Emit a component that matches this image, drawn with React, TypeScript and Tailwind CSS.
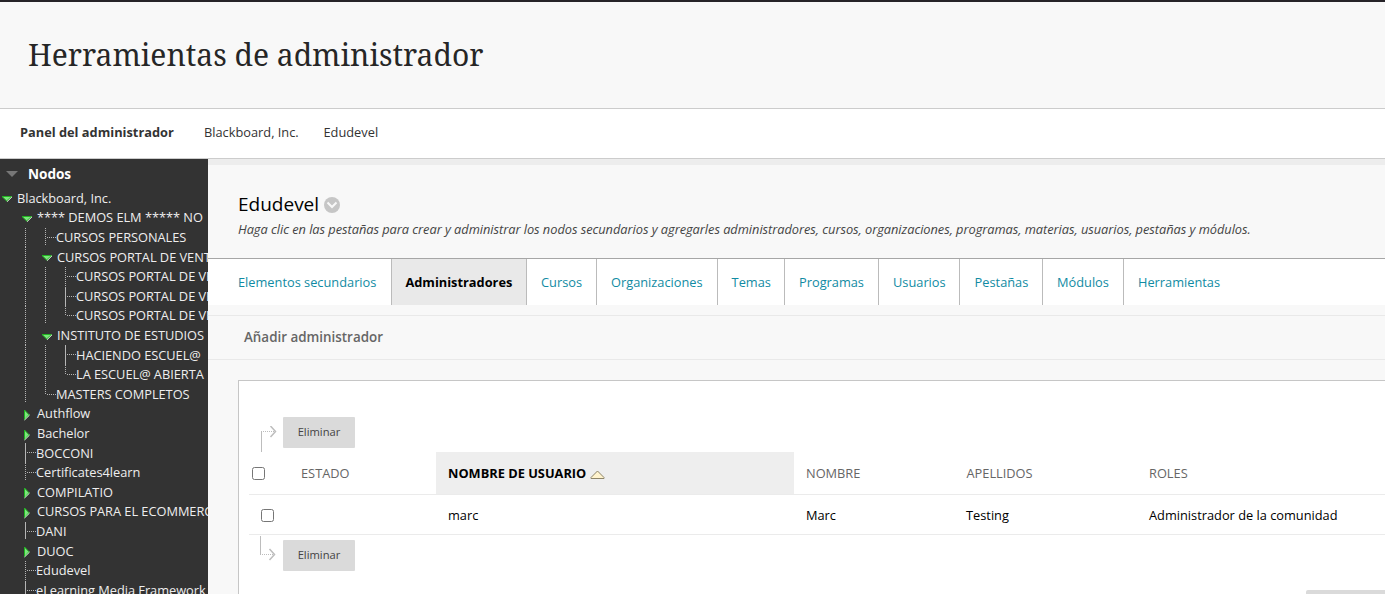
import React from 'react';
import clsx from 'clsx';

// Guides, one character per level to the left of the node:
// ' ' empty, ':' dotted line, '.' dotted line that stops before the row ends
type TreeNode = {
  label: string;
  guides: string;
  kind: 'open' | 'closed' | 'leaf';
  line?: 'dotted' | 'solid' | 'dotted-end' | 'solid-end' | 'corner';
};

const NODES: TreeNode[] = [
  { label: 'Blackboard, Inc.', guides: '', kind: 'open' },
  { label: '**** DEMOS ELM ***** NO', guides: ' ', kind: 'open' },
  { label: 'CURSOS PERSONALES', guides: ' :', kind: 'leaf', line: 'dotted-end' },
  { label: 'CURSOS PORTAL DE VENTA', guides: ' :', kind: 'open' },
  { label: 'CURSOS PORTAL DE VENTA', guides: ' ::', kind: 'leaf', line: 'dotted' },
  { label: 'CURSOS PORTAL DE VENTA', guides: ' ::', kind: 'leaf', line: 'solid' },
  { label: 'CURSOS PORTAL DE VENTA', guides: ' :.', kind: 'leaf', line: 'corner' },
  { label: 'INSTITUTO DE ESTUDIOS', guides: ' :', kind: 'open' },
  { label: 'HACIENDO ESCUEL@', guides: ' ::', kind: 'leaf', line: 'solid' },
  { label: 'LA ESCUEL@ ABIERTA', guides: ' ::', kind: 'leaf', line: 'corner' },
  { label: 'MASTERS COMPLETOS', guides: ' .', kind: 'leaf', line: 'corner' },
  { label: 'Authflow', guides: ' ', kind: 'closed' },
  { label: 'Bachelor', guides: ' ', kind: 'closed' },
  { label: 'BOCCONI', guides: ' ', kind: 'leaf', line: 'solid' },
  { label: 'Certificates4learn', guides: ' ', kind: 'leaf', line: 'dotted-end' },
  { label: 'COMPILATIO', guides: ' ', kind: 'closed' },
  { label: 'CURSOS PARA EL ECOMMERCE', guides: ' ', kind: 'closed' },
  { label: 'DANI', guides: ' ', kind: 'leaf', line: 'solid-end' },
  { label: 'DUOC', guides: ' ', kind: 'closed' },
  { label: 'Edudevel', guides: ' ', kind: 'leaf', line: 'dotted' },
  { label: 'eLearning Media Framework', guides: ' ', kind: 'leaf', line: 'solid' },
];

const TABS = [
  { label: 'Elementos secundarios', width: 'w-[184px] pl-[30px]' },
  { label: 'Administradores', width: 'w-[135px] pl-[13.4px]', active: true },
  { label: 'Cursos', width: 'w-[70px] pl-[14px]' },
  { label: 'Organizaciones', width: 'w-[121px] pl-[14px]' },
  { label: 'Temas', width: 'w-[67px] pl-[13.6px]' },
  { label: 'Programas', width: 'w-[94px] pl-[14px]' },
  { label: 'Usuarios', width: 'w-[81px] pl-[14px]' },
  { label: 'Pestañas', width: 'w-[83px] pl-[14.6px]' },
  { label: 'Módulos', width: 'w-[81px] pl-[14px]' },
  { label: 'Herramientas', width: 'w-[120px] pl-[14px]', last: true },
];

const COLS = 'grid grid-cols-[40px_147px_358px_160px_183px_1fr] items-center';
const DOTS_Y = 'bg-[repeating-linear-gradient(to_bottom,#b5b5b5_0_1px,transparent_1px_2px)]';
const DOTS_X = 'bg-[repeating-linear-gradient(to_right,#b5b5b5_0_1px,transparent_1px_2px)]';

function OpenIcon() {
  return (
    <svg width="12" height="8" viewBox="0 0 12 8" className="mt-[2px] shrink-0">
      <path d="M1 1.5h9.5L5.7 6z" fill="#7be87b" stroke="#22b422" strokeWidth="1" />
      <path d="M11 1.8L6 6.7" stroke="#e2f9e2" strokeWidth="1" fill="none" />
    </svg>
  );
}

function ClosedIcon() {
  return (
    <svg width="8" height="12" viewBox="0 0 8 12" className="mt-[2px] shrink-0">
      <path d="M1.5 1v9.5L6 5.7z" fill="#7be87b" stroke="#22b422" strokeWidth="1" />
      <path d="M1.5 11L6.6 6" stroke="#e2f9e2" strokeWidth="1" fill="none" />
    </svg>
  );
}

function Guide({ type }: { type: string }) {
  return (
    <span className="h-full w-5 shrink-0 pl-[5px]">
      {type === ' ' ? null : <span className={clsx('block w-px', DOTS_Y, type === ':' ? 'h-full' : 'h-[17px]')} />}
    </span>
  );
}

function LeafLine({ line }: { line: TreeNode['line'] }) {
  return (
    <span className="flex h-full w-4 shrink-0 pl-[5px]">
      <span
        className={clsx(
          'block w-px',
          line === 'solid' || line === 'solid-end' ? 'bg-[#b5b5b5]' : DOTS_Y,
          line === 'corner' && 'h-[10px]',
          (line === 'dotted-end' || line === 'solid-end') && 'h-[17px]',
          (line === 'dotted' || line === 'solid') && 'h-full',
        )}
      />
      <span className={clsx('ml-px mt-[9px] block h-px w-[9px]', DOTS_X)} />
    </span>
  );
}

function TreeRow({ node }: { node: TreeNode }) {
  return (
    <li className="flex h-[19.6px] items-center whitespace-nowrap">
      {node.guides.split('').map((g, i) => (
        <Guide key={i} type={g} />
      ))}
      {node.kind === 'leaf' ? (
        <LeafLine line={node.line} />
      ) : (
        <span className={clsx('flex w-[17px] shrink-0 items-center', node.kind === 'open' ? 'pl-px' : 'pl-[3px]')}>
          {node.kind === 'open' ? <OpenIcon /> : <ClosedIcon />}
        </span>
      )}
      <span>{node.label}</span>
    </li>
  );
}

function Sidebar() {
  return (
    <aside className="w-[208px] shrink-0 overflow-hidden bg-[#333333] text-[12.8px] tracking-[-0.03px] text-[#eeeeee]">
      <div className="flex h-[29.7px] items-center text-[13.6px] font-bold text-white">
        <svg width="12" height="6" viewBox="0 0 12 6" className="ml-[6px] mr-[10px] shrink-0">
          <path d="M0 0h12L6 6z" fill="#777777" />
        </svg>
        Nodos
      </div>
      <ul>
        {NODES.map((n, i) => (
          <TreeRow key={i} node={n} />
        ))}
      </ul>
    </aside>
  );
}

function ActionRow({ bottom = false }: { bottom?: boolean }) {
  return (
    <div className="flex h-[35px] pl-[10px]">
      <svg
        width="28"
        height="26"
        viewBox="0 0 28 26"
        className={clsx('mr-[6px] shrink-0', bottom ? '-mt-1' : 'mt-[9px]')}
        fill="none"
        stroke="#bdbdbd"
      >
        {bottom ? (
          <>
            <path d="M11.5 0v19" />
            <path d="M11 18.5h14" strokeDasharray="1 1" />
            <path d="M20.500 13l5 5.500-5 5.500" strokeWidth="1.5" />
          </>
        ) : (
          <>
            <path d="M12.500 6v20" />
            <path d="M12 5.500h14" strokeDasharray="1 1" />
            <path d="M21.500 0l5 5.500-5 5.500" strokeWidth="1.5" />
          </>
        )}
      </svg>
      <button className="h-[31px] w-[72px] rounded-[1px] bg-[#dadada] text-[11.2px] text-[#444444]">Eliminar</button>
    </div>
  );
}

function Checkbox() {
  return <span className="block size-[13px] rounded-[2.5px] border border-[#767676] bg-white" />;
}

function UserTable() {
  return (
    <div className="text-[12.8px] text-black">
      <div className={clsx(COLS, 'ml-[10px] h-[43px] border-b border-[#ebebeb] text-[#666666]')}>
        <span className="pl-[3px]"><Checkbox /></span>
        <span className="pl-3 pt-px">ESTADO</span>
        <span className="flex h-[42px] items-center bg-[#eeeeee] pl-3 pt-px font-bold text-black">
          NOMBRE DE USUARIO
          <svg width="15" height="10" viewBox="0 0 15 10" className="ml-1 mt-[2px]">
            <path d="M7.500 1L14 7.500v1H1v-1z" fill="#fff3cd" stroke="#8d8468" />
          </svg>
        </span>
        <span className="pl-3 pt-px">NOMBRE</span>
        <span className="pl-[12.5px] pt-px">APELLIDOS</span>
        <span className="pl-3 pt-px">ROLES</span>
      </div>
      <div className={clsx(COLS, 'ml-[10px] h-10 border-b border-[#ebebeb]')}>
        <span className="pl-3 pt-px"><Checkbox /></span>
        <span />
        <span className="pl-3 pt-[3px]">marc</span>
        <span className="pl-3 pt-[3px]">Marc</span>
        <span className="pl-3 pt-[3px]">Testing</span>
        <span className="whitespace-nowrap pl-3 pt-[3px]">Administrador de la comunidad</span>
      </div>
    </div>
  );
}

export default function App() {
  return (
    <div className="flex h-[594px] w-[1385px] flex-col overflow-hidden bg-[#f8f8f8] font-['Open_Sans',sans-serif] leading-normal">
      <header className="flex h-[109px] shrink-0 items-center border-b border-t-2 border-b-[#cccccc] border-t-[#262328] pb-[2px] pl-7">
        <h1 className="font-['Noto_Serif','DejaVu_Serif',serif] text-[30px] text-[#262626]">
          Herramientas de administrador
        </h1>
      </header>
      <nav className="flex h-[50px] shrink-0 items-center border-b border-[#cccccc] bg-white pb-[2px] pl-5 text-[12.8px] text-[#333333]">
        <span className="w-[184px] font-bold">Panel del administrador</span>
        <span className="w-[119.5px]">Blackboard, Inc.</span>
        <span>Edudevel</span>
      </nav>

      <div className="flex min-h-0 flex-1">
        <Sidebar />
        <main className="flex min-w-0 flex-1 flex-col border-t-[6px] border-[#ededed]">
          <div className="h-[93px] shrink-0 pl-[30px] pt-[25px]">
            <div className="flex h-7 items-center text-[19px] text-black">
              Edudevel
              <svg width="16" height="16" viewBox="0 0 16 16" className="ml-[5px] mt-[2px]">
                <circle cx="8" cy="8" r="8" fill="#c6c6c6" />
                <path d="M3.500 5.500L8 10l4.500-4.500" fill="none" stroke="#f8f8f8" strokeWidth="2" />
              </svg>
            </div>
            <p className="mt-[2px] whitespace-nowrap text-[12.8px] italic tracking-[-0.033px] text-[#444444]">
              Haga clic en las pestañas para crear y administrar los nodos secundarios y agregarles administradores, cursos,
              organizaciones, programas, materias, usuarios, pestañas y módulos.
            </p>
          </div>

          <div className="flex h-[47px] shrink-0 border-t border-[#a6a6a6] bg-white text-[12.8px]">
            {TABS.map((tab) => (
              <a
                key={tab.label}
                className={clsx(
                  'flex shrink-0 items-center whitespace-nowrap pt-px',
                  tab.width,
                  !tab.last && 'border-r border-[#bbbbbb]',
                  tab.active ? 'bg-[#e9e9e9] font-bold text-black' : 'text-[#118ba3]',
                )}
              >
                {tab.label}
              </a>
            ))}
          </div>

          <div className="mt-[10px] flex h-[45px] shrink-0 items-center border-y border-[#e9e9e9] pb-px pl-9 text-[13.4px] font-semibold text-[#666666]">
            Añadir administrador
          </div>

          <div className="ml-[30px] mt-5 flex min-h-0 flex-1 flex-col border-l border-t border-[#c6c6c6] bg-white pt-9">
            <ActionRow />
            <UserTable />
            <div className="pt-[5px]">
              <ActionRow bottom />
            </div>
            <div className="mt-[15px] h-8 w-[79px] shrink-0 self-end rounded-tl-[2px] bg-[#dadada]" />
          </div>
        </main>
      </div>
    </div>
  );
}
